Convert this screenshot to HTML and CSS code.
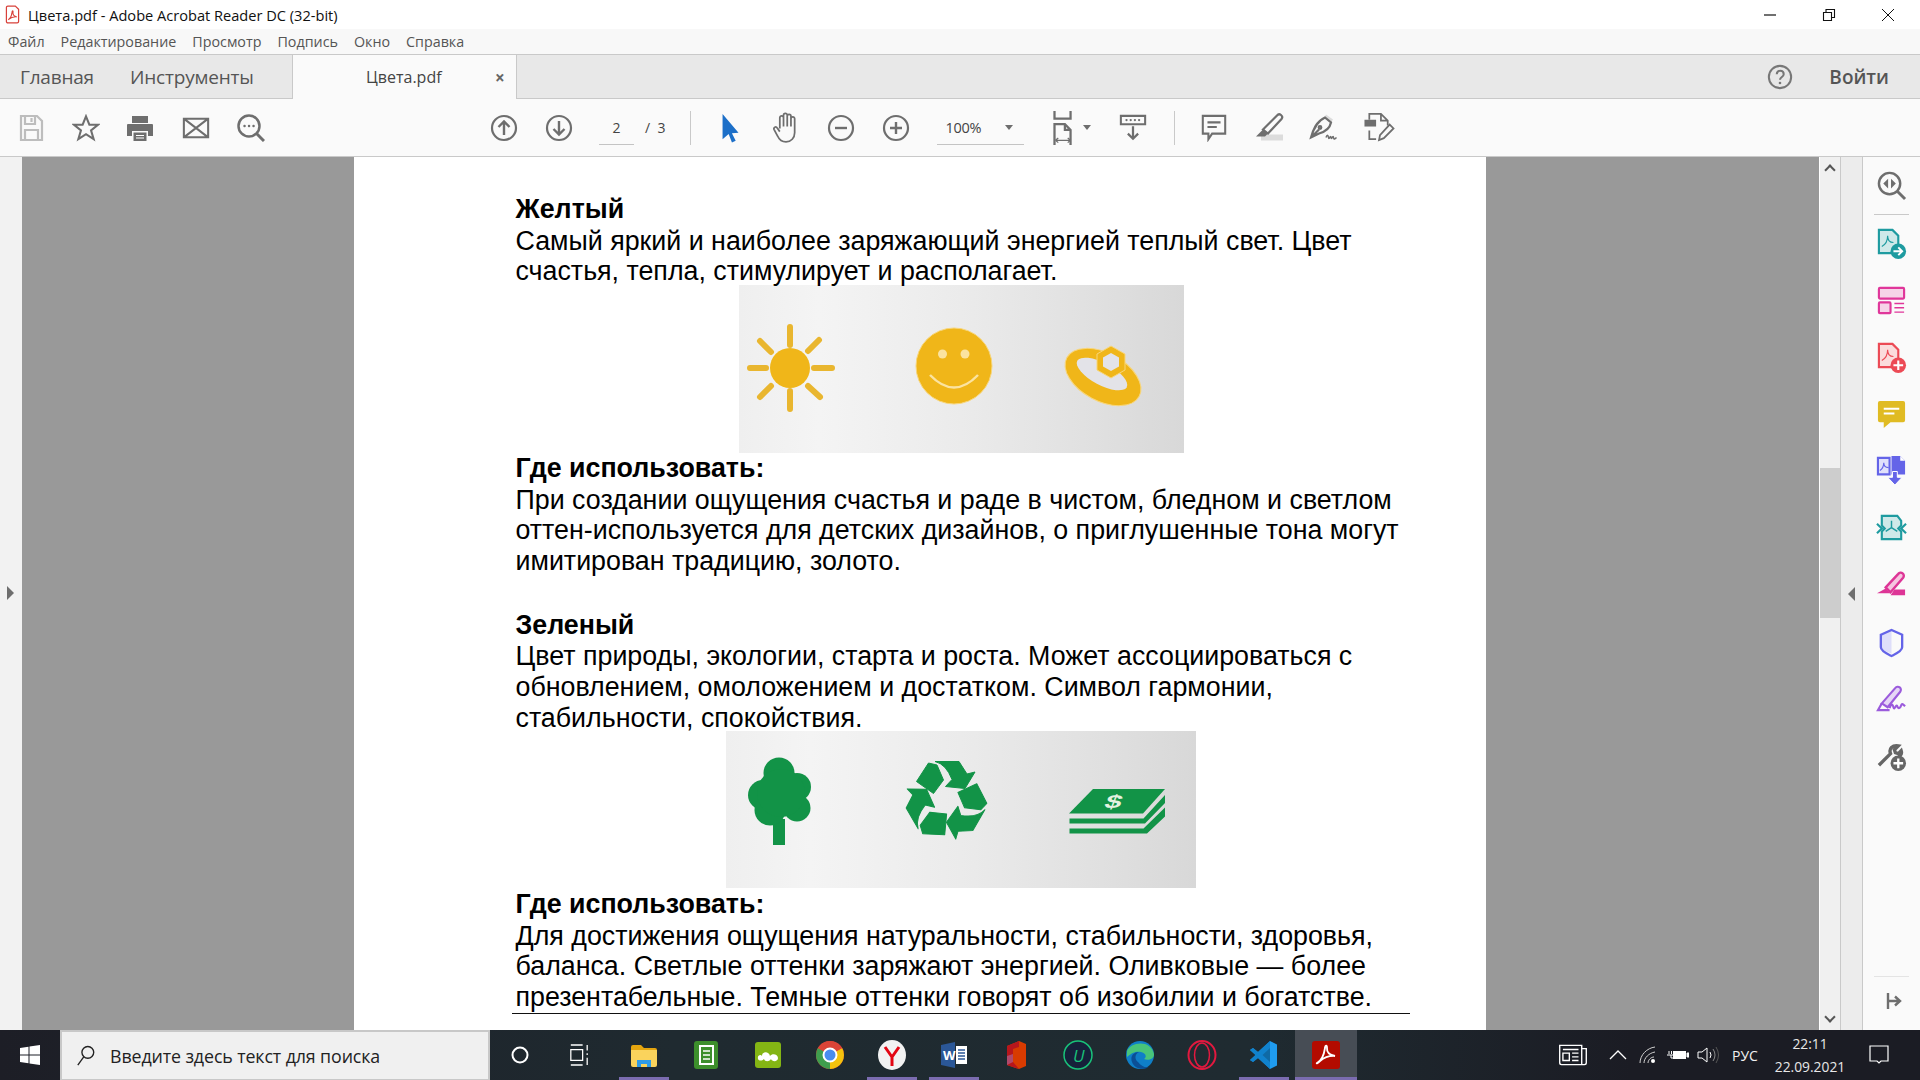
FILE: index.html
```html
<!DOCTYPE html>
<html>
<head>
<meta charset="utf-8">
	<title>Цвета.pdf</title>
	<link rel="stylesheet" href="styles.css">
</head>
<body>
<div class="app">
	<!-- заголовок окна -->
	<div class="titlebar">
		<svg class="title-icon" viewBox="0 0 16 20"><path d="M1.5 2.5a1.5 1.5 0 0 1 1.500-1.500h8l3.500 3.500v13a1.500 1.500 0 0 1-1.500 1.500h-10a1.500 1.500 0 0 1-1.500-1.500z" fill="#fff" stroke="#d8413a" stroke-width="1.300"/><path d="M3.500 15.500c2-1 3.500-4 4-8 .2-2 1.300-2 1 0-.3 2.500 1.500 4.500 4 5-3-.3-6 .5-9 3z" fill="none" stroke="#d8413a" stroke-width="1.200"/></svg>
		<span class="title-text">Цвета.pdf - Adobe Acrobat Reader DC (32-bit)</span>
		<div class="win-btns">
			<svg class="win-btn" viewBox="0 0 14 14"><path d="M1 7h12" stroke="#111" stroke-width="1.200"/></svg>
			<svg class="win-btn" viewBox="0 0 14 14"><path d="M1.500 4.500h8v8h-8zM4 4.500v-3h8.500v8h-3" fill="none" stroke="#111" stroke-width="1.100"/></svg>
			<svg class="win-btn" viewBox="0 0 14 14"><path d="M1 1l12 12M13 1l-12 12" stroke="#111" stroke-width="1"/></svg>
		</div>
	</div>
	<div class="menubar">
		<span>Файл</span><span>Редактирование</span><span>Просмотр</span><span>Подпись</span><span>Окно</span><span>Справка</span>
	</div>
	<div class="tabs">
		<span class="tab-link tab-home">Главная</span>
		<span class="tab-link tab-tools">Инструменты</span>
		<div class="tab-doc"><span class="tab-name">Цвета.pdf</span><span class="tab-close">×</span></div>
		<svg class="help" viewBox="0 0 28 28"><circle cx="14" cy="14" r="12" fill="none" stroke="#777" stroke-width="2.200"/><path d="M10.500 11c0-5 7.500-5 7.500 0 0 3-4 3-4 6" fill="none" stroke="#777" stroke-width="2.200"/><circle cx="14" cy="20.500" r="1.400" fill="#777"/></svg>
		<span class="login">Войти</span>
	</div>
	<!-- панель инструментов -->
	<div class="toolbar">
		<div class="tool"><svg class="ico pale" viewBox="0 0 26 28"><path d="M3 2h16l5 5v19H3zM7 2v8h10V2M13.500 4v4M7 26v-10h13v10"/></svg></div>
		<div class="tool"><svg class="ico" viewBox="0 0 30 30"><path d="M15 2.500l3.600 9h9.200l-7.400 6 2.800 9.500-8.200-5.400-8.200 5.400 2.800-9.500-7.400-6h9.200z"/></svg></div>
		<div class="tool tool-print"><svg class="ico" viewBox="0 0 28 28"><path class="solid" d="M6 2h16v7H6zM2 10h24a1 1 0 0 1 1 1v11h-5v-5H6v5H1V11a1 1 0 0 1 1-1zM7.500 18.500h13V27h-13z"/><path class="cut" d="M10 21.500h8M10 24h8"/></svg></div>
		<div class="tool"><svg class="ico mail" viewBox="0 0 30 24"><path d="M2 2h26v20H2zM2 2l26 20M28 2L2 22"/></svg></div>
		<div class="tool"><svg class="ico" viewBox="0 0 28 28"><circle cx="12" cy="12" r="10.500" stroke-width="2.500"/><path d="M19.500 19.500l7.500 7.500" stroke-width="3"/><path class="dots" d="M7.500 12h.1M12 12h.1M16.500 12h.1"/></svg></div>

		<div class="tool nav-first"><svg class="ico" viewBox="0 0 28 28"><circle cx="14" cy="14" r="12"/><path d="M14 21V8M8.500 13L14 7.500l5.500 5.500" stroke-width="2.400"/></svg></div>
		<div class="tool"><svg class="ico" viewBox="0 0 28 28"><circle cx="14" cy="14" r="12"/><path d="M14 7v13M8.500 15l5.500 5.500 5.500-5.500" stroke-width="2.400"/></svg></div>
		<div class="page-input">2</div>
		<span class="page-total">/ &nbsp;3</span>
		<div class="tool-sep sep-a"></div>

		<div class="tool"><svg class="ico cursor" viewBox="0 0 20 32"><path class="blue" d="M1 1l17 20-7 .5 4 8-4 2-3.500-9L1 28z"/></svg></div>
		<div class="tool"><svg class="ico thin hand" viewBox="0 0 28 32"><path d="M8 17V6.500a1.800 1.800 0 0 1 3.600 0V15M11.600 15V4a1.800 1.800 0 0 1 3.600 0v11M15.200 15V5a1.800 1.800 0 0 1 3.600 0v10M18.800 15V7.500a1.800 1.800 0 0 1 3.600 0V21c0 5-3.500 9-8.400 9-4 0-6.500-2-8-5.500L2.500 18c-1-2.200 1.800-3.500 3-1.500L8 20"/></svg></div>
		<div class="tool"><svg class="ico" viewBox="0 0 28 28"><circle cx="14" cy="14" r="12"/><path d="M8 14h12" stroke-width="2.400"/></svg></div>
		<div class="tool"><svg class="ico" viewBox="0 0 28 28"><circle cx="14" cy="14" r="12"/><path d="M8 14h12M14 8v12" stroke-width="2.400"/></svg></div>
		<div class="zoom-box"><span>100%</span><i class="caret"></i></div>
		<div class="fit">
			<svg class="ico" viewBox="0 0 24 36"><path d="M3 0v8h17V0" /><path d="M3 36V14h11l6 6v16M14 14v6h6"/><path d="M4 31h16M4 31l3-2.500M4 31l3 2.500M20 31l-3-2.500M20 31l-3 2.500" stroke-width="1.300"/></svg>
			<i class="caret"></i>
		</div>
		<div class="tool read"><svg class="ico" viewBox="0 0 30 30"><path d="M2 2h26v9H2z"/><path class="dots thin-dots" d="M8 6.500h.1M12.500 6.500h.1M17 6.500h.1M21.500 6.500h.1"/><path d="M15 13v13M9.500 21l5.500 5.500 5.500-5.500" stroke-width="2.400"/></svg></div>
		<div class="tool-sep sep-b"></div>
		<div class="tool"><svg class="ico" viewBox="0 0 28 30"><path d="M2 2h24v19H12l-4 6v-6H2zM7 9h14M7 14h10"/></svg></div>
		<div class="tool"><svg class="ico big" viewBox="0 0 32 30"><path class="shade" d="M8 22h22v6H8z"/><path d="M10 17L24 3a2.500 2.500 0 0 1 4.500 3.500L15 21z"/><path class="solid" d="M10 17l5 4-3 3H3z"/></svg></div>
		<div class="tool"><svg class="ico big" viewBox="0 0 32 30"><path class="shade" d="M18 2l7 5-2 3-7-4z" /><path d="M17 5l6 5c-1 5-5 9-12 11l-8 4c2-7 5-16 14-20zM3 25l8-8"/><circle cx="12" cy="15" r="1.300"/><path d="M18 25c1-3 2-3 2.500 0s2-3 2.500 0 2-3 2.500 0 2 1 3 0" stroke-width="1.500"/></svg></div>
		<div class="tool"><svg class="ico big" viewBox="0 0 32 32"><path d="M6 8V2h12l7 7v5M18 2v7h7M6 19v9h7" stroke-width="1.800"/><path class="solid" d="M1 8h12v7H1z"/><path d="M16 29l1-5L27 13l4 4-10 10z" stroke-width="1.800"/></svg></div>
	</div>

	<div class="main">
		<div class="rail-left"><i class="arrow-right"></i></div>
		<div class="viewer">
			<div class="page">
				<h2>Желтый</h2>
				<p>Самый яркий и наиболее заряжающий энергией теплый свет. Цвет<br>счастья, тепла, стимулирует и располагает.</p>
				<div class="pic pic-yellow">
					<svg viewBox="0 0 445 168" width="445" height="168">
						<g class="rays">
							<circle cx="51" cy="83" r="20" fill="#f0b619" stroke="none"/>
							<path d="M51 42v18M51 106v18M11 83h16M75 83h18M21 56l11 11M80 55l-11 11M21 112l11-11M81 112l-12-11"/>
						</g>
						<circle cx="215" cy="81" r="38" fill="#f0b619" stroke="#f8d67a"/>
						<circle cx="203.500" cy="69" r="4.500" fill="#fbe3a0"/>
						<circle cx="226" cy="69" r="4.500" fill="#fbe3a0"/>
						<path d="M191 90q24 25 48 0" fill="none" stroke="#fbe3a0" stroke-width="2.500"/>
						<ellipse cx="364" cy="92" rx="41" ry="24" transform="rotate(28 364 92)" fill="#f0b619" stroke="#f8d67a"/>
						<ellipse cx="363" cy="89" rx="28" ry="11" transform="rotate(28 363 89)" fill="#e3e3e8"/>
						<path d="M372 61l14 8v16l-14 8-14-8v-16z" fill="#f0b619" stroke="#f8d67a" stroke-width="1"/>
						<path d="M372 68l8 4.500v9L372 86l-8-4.500v-9z" fill="#e3e3e8"/>
					</svg>
				</div>
				<h2>Где использовать:</h2>
				<p>При создании ощущения счастья и раде в чистом, бледном и светлом<br>оттен-используется для детских дизайнов, о приглушенные тона могут<br>имитирован традицию, золото.</p>
				<h2 class="next">Зеленый</h2>
				<p>Цвет природы, экологии, старта и роста. Может ассоциироваться с<br>обновлением, омоложением и достатком. Символ гармонии,<br>стабильности, спокойствия.</p>
				<div class="pic pic-green">
					<svg viewBox="0 0 470 157" width="470" height="157">
						<g fill="#129347">
							<rect x="47" y="88" width="12" height="26"/>
							<circle cx="53" cy="42" r="15.500"/><circle cx="37" cy="64" r="15"/><circle cx="71" cy="56" r="14"/><circle cx="71" cy="77" r="13.500"/><circle cx="44" cy="79" r="15.500"/><circle cx="55" cy="62" r="24"/>
						</g>
						<g fill="#129347" stroke="#129347" stroke-linejoin="round" transform="translate(220 69)">
							<g id="rec"><path d="M-17.500-37-9-35-2.500-20-12.500-6.500-29.500-18.500z"/><path d="M-11-38.500 13-38.500 21-26 29-28 19-11.500-.5-13.500 6-20.500Q0-36-11-38.500z"/></g>
							<use href="#rec" transform="rotate(120)"/>
							<use href="#rec" transform="rotate(240)"/>
						</g>
						<g fill="#129347">
							<path d="M367 58h72l-22 24.500h-74z"/>
							<path d="M343.500 87.500h74l21.500-23.500v8l-20 20.500h-75.500z"/>
							<path d="M343.500 97.500h74l21.500-21v9l-18 17h-77.500z"/>
						</g>
						<text class="dollar" x="0" y="0" transform="translate(377 77) skewX(-22) scale(1.350 .85)">$</text>
					</svg>
				</div>
				<h2>Где использовать:</h2>
				<p>Для достижения ощущения натуральности, стабильности, здоровья,<br>баланса. Светлые оттенки заряжают энергией. Оливковые — более<br>презентабельные. Темные оттенки говорят об изобилии и богатстве.</p>
				<div class="page-rule"></div>
			</div>
		</div>
		<div class="scroll">
			<i class="chev-up"></i>
			<div class="thumb"></div>
			<i class="chev-down"></i>
		</div>
		<div class="rail-right"><i class="arrow-left"></i></div>
		<div class="side">
			<div class="side-item"><svg viewBox="0 0 32 32" class="ico"><circle cx="14" cy="14" r="11" stroke-width="2.500"/><path d="M22 22l8 8" stroke-width="3"/><path class="solid" d="M12.500 9v10l-5-5zM15.500 9v10l5-5z"/></svg></div>
			<div class="side-sep"></div>
			<div class="side-item"><svg viewBox="0 0 32 32"><path d="M3 2h14l6 6v18H3z" fill="#cfe9e9" stroke="#1e9ba0" stroke-width="2.200"/><path d="M6 19c4-2 6-7 6-11 0 4 2 7 6 7" fill="none" stroke="#1e9ba0" stroke-width="1.200"/><circle cx="23" cy="24" r="8" fill="#1e9ba0"/><path d="M18 24h8M23 20l4 4-4 4" fill="none" stroke="#fff" stroke-width="2"/></svg></div>
			<div class="side-item"><svg viewBox="0 0 32 32"><rect x="3" y="3" width="26" height="11" rx="1" fill="#f6d3e8" stroke="#e0369a" stroke-width="2.200"/><rect x="3" y="18" width="12" height="11" rx="1" fill="#f6d3e8" stroke="#e0369a" stroke-width="2.200"/><path d="M19 19h10M19 23.500h10M19 28h10" stroke="#e0369a" stroke-width="1.500"/></svg></div>
			<div class="side-item"><svg viewBox="0 0 32 32"><path d="M3 2h14l6 6v18H3z" fill="#fbdcdc" stroke="#ec4a55" stroke-width="2.200"/><path d="M6 19c4-2 6-7 6-11 0 4 2 7 6 7" fill="none" stroke="#ec4a55" stroke-width="1.200"/><circle cx="23" cy="24" r="8" fill="#ec4a55"/><path d="M18 24h10M23 19v10" fill="none" stroke="#fff" stroke-width="2.200"/></svg></div>
			<div class="side-item"><svg viewBox="0 0 32 32"><path d="M4 2h24a2 2 0 0 1 2 2v18a2 2 0 0 1-2 2H15l-7 6v-6H4a2 2 0 0 1-2-2V4a2 2 0 0 1 2-2z" fill="#e0bb23"/><path d="M8 10h16M8 15h11" stroke="#fff" stroke-width="2"/></svg></div>
			<div class="side-item"><svg viewBox="0 0 32 32"><path d="M2 2h12v17H2z" fill="#e0e0fb" stroke="#6464e8" stroke-width="2.200"/><path d="M16 0h9l5 5v14H16z" fill="#6464e8"/><path d="M25 0v5h5" fill="#fff"/><path d="M4 15c3-2 4-5 4-8 0 3 2 5 5 5" fill="none" stroke="#6464e8" stroke-width="1.200"/><path d="M12 22h5v-6h5v6h5l-7.500 8z" fill="#6464e8" stroke="#fff"/></svg></div>
			<div class="side-item"><svg viewBox="0 0 32 32"><path d="M6 3h16l4 5v5l-3 3 3 3v8H6v-8l3-3-3-3z" fill="#cfe9e9" stroke="#1e9ba0" stroke-width="2.200"/><path d="M16 8v7M16 15l-6 4M16 15l6 4" stroke="#1e9ba0" stroke-width="1.500" fill="none"/><path d="M1 11l5 5-5 5M31 11l-5 5 5 5" fill="none" stroke="#1e9ba0" stroke-width="2.200"/></svg></div>
			<div class="side-item"><svg viewBox="0 0 32 32"><path d="M10 18L23 4a3 3 0 0 1 5 4L15 23z" fill="#f6c5e0" stroke="#dd3596" stroke-width="2.500"/><path d="M10 19l5 5H1z" fill="#dd3596"/><path d="M19 20h11v6H15z" fill="#dd3596"/></svg></div>
			<div class="side-item"><svg viewBox="0 0 32 32"><path d="M16 3.500v24c-4-1.500-11-4-11-7V8z" fill="#dedefa"/><path d="M5 8l11-5 11 5v13c0 4-7 7-11 9-4-2-11-5-11-9z" fill="none" stroke="#6464e8" stroke-width="2.400"/></svg></div>
			<div class="side-item"><svg viewBox="0 0 32 32"><path d="M6 20L20 4a3 3 0 0 1 5 4L12 24z" fill="#e6d6f6" stroke="#9b5bdc" stroke-width="2.200"/><path d="M6 20l-4 7h12M14 25c2-5 3-5 4-1s3-4 4-1 3 2 4-1 3 0 4 1" fill="none" stroke="#9b5bdc" stroke-width="2.200"/></svg></div>
			<div class="side-item"><svg viewBox="0 0 32 32"><path d="M3 25L15 13c-2-5 2-9 8-8l-4 4 1 3 3 1 3-3c1 3-1 5-3 6" fill="none" stroke="#666" stroke-width="3.500"/><circle cx="23" cy="23" r="8" fill="#666"/><path d="M18 23h10M23 18v10" stroke="#fff" stroke-width="2.400"/></svg></div>
			<div class="side-sep foot-sep"></div>
			<div class="side-foot"><svg class="ico" viewBox="0 0 20 20"><path d="M4 2v16" stroke-width="2.400"/><path d="M4 10h12M11 5.500l5 4.500-5 4.500" stroke-width="2.400"/></svg></div>
		</div>
	</div>

	<!-- панель задач -->
	<div class="taskbar">
		<div class="start"><svg viewBox="0 0 20 20" width="20" height="20"><path d="M0 3l8.500-1.200v7.700H0zM9.500 1.600L20 0v9.500H9.500zM0 10.500h8.500v7.700L0 17zM9.500 10.500H20V20L9.500 18.400z" fill="#fff"/></svg></div>
		<div class="search">
			<svg viewBox="0 0 22 26" width="20" height="24"><circle cx="13" cy="9" r="6.500" fill="none" stroke="#222" stroke-width="1.500"/><path d="M8.500 14L2 23" stroke="#222" stroke-width="1.500"/></svg>
			<span>Введите здесь текст для поиска</span>
		</div>
		<div class="sys-btn"><svg viewBox="0 0 20 20" width="20" height="20"><circle cx="10" cy="10" r="7.500" fill="none" stroke="#fff" stroke-width="2"/></svg></div>
		<div class="sys-btn view-btn"><svg viewBox="0 0 22 24" width="20" height="22"><path d="M2 1h13M2 23h13M2 6h13v12H2zM20 1v6M20 10v2M20 15v8" fill="none" stroke="#fff" stroke-width="1.400"/></svg></div>

		<div class="task on"><svg viewBox="0 0 30 30"><path d="M2 7a2 2 0 0 1 2-2h8l3 3h11a2 2 0 0 1 2 2v4H2z" fill="#e5a50f"/><path d="M2 10h26v15a2 2 0 0 1-2 2H4a2 2 0 0 1-2-2z" fill="#fad35c"/><path d="M8 27v-7h14v7h-4v-3h-6v3z" fill="#2f9be6"/></svg></div>
		<div class="task"><svg viewBox="0 0 30 30"><rect x="3" y="1" width="24" height="28" rx="3" fill="#3d8f2c"/><path d="M9 6h13v18H9z" fill="none" stroke="#fff" stroke-width="2"/><path d="M12 11h7M12 15h7M12 19h7" stroke="#fff" stroke-width="1.500"/></svg></div>
		<div class="task"><svg viewBox="0 0 30 30"><rect x="2" y="2" width="26" height="26" rx="3" fill="#84b514"/><path d="M5 19c-1-4 3-5 4-3 0-5 7-5 8 0 2-3 8-2 8 2 0 4-6 4-7 1-2 3-6 3-7 0-2 2-5 2-6 0z" fill="#fff"/></svg></div>
		<div class="task"><svg viewBox="0 0 30 30"><circle cx="15" cy="15" r="14" fill="#db4437"/><path d="M15 15L27.100 8A14 14 0 0 1 15 29z" fill="#f4c20d"/><path d="M15 15L15 29A14 14 0 0 1 2.900 8z" fill="#3f9e4d"/><path d="M15 15L2.900 8A14 14 0 0 1 27.100 8z" fill="#db4437"/><circle cx="15" cy="15" r="6.500" fill="#4a8cf0" stroke="#fff" stroke-width="2"/></svg></div>
		<div class="task on"><svg viewBox="0 0 30 30"><ellipse cx="15" cy="15" rx="14" ry="15" fill="#f2f2f2"/><path d="M8 7l7 10 7-10M15 17v9" fill="none" stroke="#e30613" stroke-width="3"/></svg></div>
		<div class="task on"><svg viewBox="0 0 30 30"><path d="M16 2L2 5v20l14 3z" fill="#2b5797"/><path d="M17 6h11v18H17z" fill="#fff"/><path d="M19 10h7M19 13h7M19 16h7M19 19h7" stroke="#2b5797" stroke-width="1.500"/><text class="word" x="4" y="20">W</text></svg></div>
		<div class="task"><svg viewBox="0 0 30 30"><path d="M6 6L18 1l7 3v22l-7 3-12-4z" fill="#d83b01"/><path d="M6 6L18 1v6l-6 2v13l6 7-12-4z" fill="#b7161c"/><path d="M6 16l6-2v8l-6 3z" fill="#b0496b"/></svg></div>
		<div class="task"><svg viewBox="0 0 30 30"><circle cx="15" cy="15" r="14" fill="#16213a" stroke="#19c27a" stroke-width="1.500"/><text class="ufo" x="10" y="22">U</text></svg></div>
		<div class="task"><svg viewBox="0 0 30 30"><circle cx="15" cy="15" r="14" fill="#0f7fc8"/><path d="M2 11C5 2 26 -1 29 14c.5 5-6 7-10 5 3-2 2-6-3-7C9 11 6 14 2 17z" fill="#48c47a"/><path d="M13 22c-4-3-3-8 1-10-6 0-9 5-7 10 2 6 10 9 17 5-4 1-8-1-11-5z" fill="#0b4f96"/></svg></div>
		<div class="task"><svg viewBox="0 0 30 30"><ellipse cx="15" cy="15" rx="13.500" ry="14" fill="none" stroke="#e2193f" stroke-width="2"/><ellipse cx="15" cy="15" rx="7.500" ry="12" fill="none" stroke="#e2193f" stroke-width="1.500"/></svg></div>
		<div class="task on"><svg viewBox="0 0 30 30"><path d="M21 1l7 3.500v21L21 29 9 18l-5 4-3-2 5.500-5L1 10l3-2 5 4z" fill="#1f9cf0"/><path d="M21 8l-7.500 7L21 22z" fill="#1a2329"/><path d="M21 1L9 12 4 8l-3 2 5.500 5L1 20l3 2 5-4 12 11z" fill="#0d7cc4" opacity=".8"/></svg></div>
		<div class="task on active"><svg viewBox="0 0 30 30"><rect x="1" y="1" width="28" height="28" rx="3" fill="#b30b00"/><path d="M6 23c4-2 7-8 8-15 .3-3 2.200-3 2 0-.4 4.500 3 7 8 8-5-.3-11 1.500-15 5-2 2-4 3-3 2z" fill="none" stroke="#fff" stroke-width="1.800"/></svg></div>

		<div class="tray">
			<div class="tray-news"><svg viewBox="0 0 32 24" width="30" height="22"><path d="M1.500 1.500h24v21h-22a2 2 0 0 1-2-2zM25.500 5h5v15.500a2 2 0 0 1-2 2h-3M5 6h17M5 10h7v8H5zM15 10h7M15 14h7M15 18h7" fill="none" stroke="#fff" stroke-width="1.500"/></svg></div>
			<div class="tray-item"><svg viewBox="0 0 18 12" width="18" height="12"><path d="M1 10l8-8 8 8" fill="none" stroke="#fff" stroke-width="1.300"/></svg></div>
			<div class="tray-item"><svg viewBox="0 0 18 18" width="18" height="18"><path d="M1 17C1 9 8 2 16 1M5 17c0-5 5-10 11-11M9 17c0-3 3-6 6-6" fill="none" stroke="#cfcfcf" stroke-width="1"/><circle cx="14" cy="15" r="2" fill="#fff"/></svg></div>
			<div class="tray-item"><svg viewBox="0 0 22 14" width="22" height="14"><path d="M6 3h13v8H6z" fill="#fff"/><path d="M20 5h2v4h-2zM0 7h6M2 3v3M4.500 3v3" stroke="#fff" fill="#fff"/><path d="M4 7v3h2" stroke="#fff" fill="none"/></svg></div>
			<div class="tray-item"><svg viewBox="0 0 22 18" width="22" height="18"><path d="M1 6h4l5-4v14l-5-4H1z" fill="none" stroke="#fff"/><path d="M13 6q2 3 0 6" fill="none" stroke="#fff"/><path d="M16 3q4 6 0 12" fill="none" stroke="#888"/><path d="M19 1q5 8 0 16" fill="none" stroke="#555"/></svg></div>
			<span class="tray-lang">РУС</span>
			<div class="clock"><span>22:11</span><span>22.09.2021</span></div>
			<div class="tray-note"><svg viewBox="0 0 20 20" width="20" height="20"><path d="M1 1h18v15h-7l-2 2-2-2H1z" fill="none" stroke="#fff" stroke-width="1.200"/></svg></div>
		</div>
	</div>
</div>
</body>
</html>
```
FILE: styles.css
```css
*{margin: 0;padding: 0;box-sizing: border-box;}
html,body{
	width: 1920px;
	height: 1080px;
	overflow: hidden;
}
body{
	font-family: "Open Sans","Noto Sans",sans-serif;
	background: #fff;
}
.app{
	display: flex;
	flex-direction: column;
	width: 1920px;
	height: 1080px;
}
/* title */
.titlebar{
	display: flex;
	align-items: center;
	height: 29px;
	padding-left: 5px;
	background: #fff;
	flex: none;
}
.title-icon{
	width: 15px;
	height: 19px;
	margin-right: 8px;
}
.title-text{
	font-size: 14.600px;
	color: #111;
}
.win-btns{
	display: flex;
	margin-left: auto;
}
.win-btn{
	width: 14px;
	height: 14px;
	margin-right: 45px;
}
.win-btn:last-child{
	margin-right: 25px;
}
.menubar{
	display: flex;
	align-items: center;
	height: 25px;
	padding-left: 8px;
	background: #f8f8f8;
	font-size: 14.300px;
	color: #555;
	flex: none;
}
.menubar span{
	margin-right: 16px;
}
/* tabs */
.tabs{
	display: flex;
	align-items: center;
	height: 45px;
	background: #e8e8e8;
	border-top: 1px solid #c9c9c9;
	border-bottom: 1px solid #c9c9c9;
	flex: none;
}
.tab-link{
	font-size: 19px;
	color: #555;
	letter-spacing: -0.200px;
}
.tab-home{
	margin-left: 20px;
	width: 110px;
}
.tab-tools{
	width: 162px;
}
.tab-doc{
	display: flex;
	align-items: center;
	width: 225px;
	height: 44px;
	background: #fafafa;
	border-left: 1px solid #c9c9c9;
	border-right: 1px solid #c9c9c9;
	align-self: flex-start;
	font-size: 16px;
	color: #444;
}
.tab-name{
	margin-left: 73px;
	width: 129px;
}
.tab-close{
	font-size: 17px;
	font-weight: 700;
	color: #666;
}
.help{
	width: 26px;
	height: 26px;
	margin-left: auto;
	margin-right: 36px;
}
.login{
	font-size: 19px;
	font-weight: 600;
	color: #555;
	margin-right: 31px;
}
/* toolbar */
.toolbar{
	display: flex;
	align-items: center;
	height: 58px;
	padding-left: 3px;
	background: #fafafa;
	border-bottom: 1px solid #c9c9c9;
	flex: none;
}
.tool{
	display: flex;
	align-items: center;
	justify-content: center;
	width: 55px;
	height: 36px;
	flex: none;
}
.tool-print{
	margin-left: -1px;
	margin-right: 1px;
}
.ico{
	width: 28px;
	height: 28px;
	fill: none;
	stroke: #6e6e6e;
	stroke-width: 2.200;
}
.ico.pale{
	stroke: #bdbdbd;
}
.ico.thin{
	stroke-width: 1.700;
}
.ico.big{
	width: 32px;
	height: 31px;
}
.ico.hand{
	width: 30px;
	height: 33px;
}
.ico.cursor{
	height: 30px;
}
.ico .solid{
	fill: #6e6e6e;
	stroke: none;
}
.ico .cut{
	stroke: #fff;
	stroke-width: 1;
}
.ico .dots{
	stroke-width: 2.400;
	stroke-linecap: round;
}
.ico .blue{
	fill: #1c6fc8;
	stroke: none;
}
.ico .shade{
	fill: #dcdcdc;
	stroke: none;
}
.nav-first{
	margin-left: 198px;
}
.page-input{
	width: 35px;
	height: 34px;
	margin-left: 13px;
	margin-top: 1px;
	border-bottom: 1px solid #c4c4c4;
	text-align: center;
	font-size: 14px;
	line-height: 34px;
	color: #444;
}
.page-total{
	width: 45px;
	margin-left: 11px;
	font-size: 14px;
	color: #444;
}
.tool-sep{
	width: 1px;
	height: 34px;
	background: #c9c9c9;
	flex: none;
}
.sep-a{
	margin-right: 12.500px;
}
.sep-b{
	margin: 0 12px 0 13px;
}
.zoom-box{
	display: flex;
	align-items: center;
	width: 87px;
	height: 34px;
	margin-left: 13px;
	padding-left: 9px;
	border-bottom: 1px solid #c4c4c4;
	font-size: 14.500px;
	letter-spacing: -0.300px;
	color: #444;
}
.caret{
	width: 0;
	height: 0;
	border-left: 4px solid transparent;
	border-right: 4px solid transparent;
	border-top: 5px solid #6e6e6e;
}
.zoom-box .caret{
	margin-left: 24px;
}
.fit{
	display: flex;
	align-items: center;
	margin-left: 27px;
	height: 36px;
	width: 68px;
	flex: none;
}
.fit .ico{
	width: 24px;
	height: 34px;
	stroke-width: 2.400;
}
.fit .caret{
	margin-left: 8px;
}
.read{
	margin-left: -13px;
}
/* main */
.main{
	display: flex;
	flex: 1;
	min-height: 0;
}
.rail-left{
	display: flex;
	align-items: center;
	justify-content: center;
	width: 22px;
	padding-right: 2px;
	padding-bottom: 2px;
	background: #f2f2f2;
	flex: none;
}
.arrow-right{
	border-top: 7px solid transparent;
	border-bottom: 7px solid transparent;
	border-left: 7px solid #6e6e6e;
}
.viewer{
	display: flex;
	justify-content: center;
	width: 1798px;
	background: #999;
	border-right: 1px solid #fff;
	overflow: hidden;
	flex: none;
}
.page{
	width: 1132px;
	height: 100%;
	padding: 37px 0 0 162px;
	background: #fff;
	font-family: "Liberation Sans",Arial,sans-serif;
	font-size: 26.800px;
	line-height: 30.600px;
	color: #000;
	white-space: nowrap;
	margin-right: 2px;
}
.page h2{
	font-size: 26.800px;
	font-weight: 700;
	line-height: 30.600px;
}
.page p{
	margin-top: 1px;
}
.page h2.next{
	margin-top: 33.500px;
}
.pic{
	display: block;
	line-height: 0;
	background: linear-gradient(90deg,#efefef 0%,#f4f4f4 18%,#ebebeb 50%,#e0e0e0 80%,#d8d8d8 100%);
}
.pic-yellow{
	width: 445px;
	height: 168px;
	margin: -1.800px 0 0 223px;
}
.pic-green{
	width: 470px;
	height: 157px;
	margin: -2.300px 0 1px 210px;
}
.rays{
	fill: none;
	stroke: #e9b62f;
	stroke-width: 6;
	stroke-linecap: round;
}
.dollar{
	font-family: "Liberation Sans",sans-serif;
	font-size: 22px;
	font-weight: 700;
	fill: #e4f2e0;
}
.page-rule{
	width: 898px;
	height: 1px;
	margin: 0.600px 0 0 -4px;
	background: #111;
}
/* scroll */
.scroll{
	position: relative;
	display: flex;
	flex-direction: column;
	align-items: center;
	width: 20px;
	background: #f0f0f0;
	flex: none;
}
.chev-up,.chev-down{
	display: block;
	width: 8px;
	height: 8px;
	border-left: 2px solid #555;
	border-top: 2px solid #555;
	transform: rotate(45deg);
	margin-top: 9px;
	flex: none;
}
.chev-down{
	margin-top: auto;
	margin-bottom: 9px;
	transform: rotate(225deg);
}
.thumb{
	position: absolute;
	left: 0;
	top: 311px;
	width: 100%;
	height: 150px;
	background: #cdcdcd;
}
.rail-right{
	display: flex;
	align-items: center;
	justify-content: center;
	width: 23px;
	background: #ececec;
	border-left: 1px solid #c9c9c9;
	border-right: 1px solid #c9c9c9;
	flex: none;
}
.arrow-left{
	border-top: 7px solid transparent;
	border-bottom: 7px solid transparent;
	border-right: 7px solid #6e6e6e;
}
.side{
	display: flex;
	flex-direction: column;
	align-items: center;
	flex: 1;
	background: #fafafa;
	padding-right: 1px;
}
.side-item{
	display: flex;
	align-items: center;
	justify-content: center;
	height: 57px;
	flex: none;
}
.side-item svg{
	width: 31px;
	height: 31px;
}
.side-sep{
	width: 35px;
	height: 1px;
	background: #c9c9c9;
	flex: none;
}
.foot-sep{
	margin-top: auto;
	background: #e4e4e4;
}
.side-foot{
	display: flex;
	align-items: center;
	justify-content: center;
	width: 100%;
	height: 53px;
	padding: 0 0 5px 6px;
}
.side-foot .ico{
	width: 20px;
	height: 20px;
}
/* taskbar */
.taskbar{
	display: flex;
	align-items: center;
	height: 50px;
	background: linear-gradient(90deg,#1d1e26 0%,#1f2a30 35%,#1f2b31 65%,#1b1c24 85%);
	flex: none;
}
.start{
	display: flex;
	align-items: center;
	justify-content: center;
	width: 60px;
	height: 50px;
}
.search{
	display: flex;
	align-items: center;
	width: 430px;
	height: 50px;
	padding-left: 14px;
	background: #f0f0f0;
	border: 2px solid #c8c8c8;
	border-bottom-width: 1px;
	font-size: 17.800px;
	letter-spacing: -0.100px;
	color: #222;
}
.search span{
	margin-left: 14px;
}
.sys-btn{
	display: flex;
	align-items: center;
	justify-content: center;
	width: 60px;
	height: 50px;
}
.view-btn{
	width: 58px;
	margin-right: 5px;
}
.task{
	position: relative;
	display: flex;
	align-items: center;
	justify-content: center;
	width: 62px;
	height: 50px;
	flex: none;
}
.task svg{
	width: 30px;
	height: 30px;
}
.task.on::after{
	content: "";
	position: absolute;
	left: 6px;
	right: 6px;
	bottom: 0;
	height: 3px;
	background: #7b6cb0;
}
.task.active{
	background: #474d55;
}
.task.active::after{
	left: 0;
	right: 0;
}
.word{
	font-family: "Open Sans",sans-serif;
	font-size: 13px;
	font-weight: 700;
	fill: #fff;
}
.ufo{
	font-family: "Open Sans",sans-serif;
	font-size: 17px;
	font-style: italic;
	fill: #19c27a;
}
.tray{
	display: flex;
	align-items: center;
	margin-left: auto;
	padding-right: 15px;
	height: 50px;
	color: #fff;
}
.tray-news{
	display: flex;
	justify-content: center;
	width: 40px;
	margin-right: 10px;
}
.tray-item{
	display: flex;
	justify-content: center;
	width: 30px;
}
.tray-lang{
	width: 44px;
	text-align: center;
	font-size: 14px;
	color: #f0f0f0;
}
.clock{
	display: flex;
	flex-direction: column;
	align-items: center;
	gap: 3px;
	width: 86px;
	font-size: 13.800px;
	line-height: 20px;
	color: #e8e8e8;
}
.tray-note{
	display: flex;
	justify-content: center;
	width: 52px;
}
```
